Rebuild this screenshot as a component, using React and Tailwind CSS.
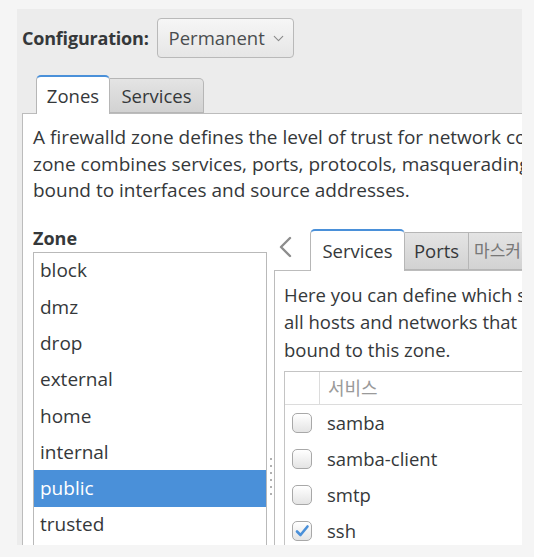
import { ChevronDown } from "lucide-react";

const zones = ["block", "dmz", "drop", "external", "home", "internal", "public", "trusted"];
const services = [
  { name: "samba", on: false },
  { name: "samba-client", on: false },
  { name: "smtp", on: false },
  { name: "ssh", on: true },
];

function Checkbox({ checked }) {
  return (
    <div className="w-[20px] h-[20px] rounded-[5px] border border-[#a8a8a8] bg-gradient-to-b from-[#ffffff] to-[#e4e4e4] flex items-center justify-center shrink-0">
      {checked && (
        <svg width="16" height="16" viewBox="0 0 16 16">
          <path d="M3 8.5 L6.5 12 L13.5 3.5" fill="none" stroke="#4a90d9" strokeWidth="2.6" strokeLinecap="round" strokeLinejoin="round" />
        </svg>
      )}
    </div>
  );
}

export default function App() {
  return (
    <div
      className="w-[534px] h-[557px] bg-[#f5f5f5] pt-[9px] pl-[17px] overflow-hidden text-[#35383a]"
      style={{ fontFamily: '"Open Sans", "Noto Sans CJK KR", sans-serif' }}
    >
      <div className="w-[505px] h-[536px] bg-[#ececec] overflow-hidden flex flex-col">
        {/* configuration row */}
        <div className="flex items-center gap-[8px] pl-[5px] pt-[9px] h-[49px]">
          <span className="text-[18px] font-bold tracking-[-0.2px]">Configuration:</span>
          <div className="h-[40px] w-[137px] rounded-[4px] border border-[#b9b9b9] bg-gradient-to-b from-[#f6f6f6] to-[#e6e6e6] flex items-center pl-[11px] gap-[5px] text-[18.5px] text-[#4a4d4f]">
            <span>Permanent</span>
            <ChevronDown size={17} strokeWidth={1.5} className="text-[#8a8a8a]" />
          </div>
        </div>

        {/* main tabs */}
        <div className="flex items-end pl-[19px] mt-[16px] h-[39px]">
          <div className="h-[39px] w-[74px] rounded-t-[5px] border border-b-0 border-[#b6b6b6] border-t-2 border-t-[#4a90d9] bg-white flex items-center justify-center text-[18.5px] relative z-10 -mb-px">
            Zones
          </div>
          <div className="h-[35px] w-[94px] rounded-tr-[5px] border border-l-0 border-[#b6b6b6] bg-gradient-to-b from-[#e4e4e4] to-[#d2d2d2] flex items-center justify-center text-[18.5px]">
            Services
          </div>
        </div>

        {/* zones panel */}
        <div className="ml-[5px] flex-1 bg-white border-l border-t border-[#bcbcbc] overflow-hidden">
          <p className="pl-[10px] pt-[10px] text-[19px] leading-[26.5px] whitespace-nowrap">
            A firewalld zone defines the level of trust for network co
            <br />
            zone combines services, ports, protocols, masquerading,
            <br />
            bound to interfaces and source addresses.
          </p>

          <div className="flex mt-[24px]">
            {/* zone list */}
            <div className="w-[244px] pl-[10px] shrink-0">
              <div className="text-[18px] font-bold h-[20px] leading-[20px]">Zone</div>
              <div className="mt-[4px] w-[234px] h-[300px] border border-[#b9b9b9] bg-white">
                {zones.map((z) => (
                  <div
                    key={z}
                    className={
                      z === "public"
                        ? "h-[36.3px] flex items-center pl-[6px] text-[19px] bg-[#4a90d9] text-white"
                        : "h-[36.3px] flex items-center pl-[6px] text-[19px]"
                    }
                  >
                    {z}
                  </div>
                ))}
              </div>
            </div>

            {/* pane handle */}
            <div className="w-[7px] shrink-0 flex flex-col items-center pt-[230px] gap-[5px]">
              {[0, 1, 2, 3, 4, 5].map((i) => (
                <div key={i} className="w-[2px] h-[2px] bg-[#b0b0b0]" />
              ))}
            </div>

            {/* zone settings */}
            <div className="flex-1 min-w-0">
              <div className="flex items-end h-[42px]">
                <div className="w-[36px] h-[42px] shrink-0 flex items-start pt-[8px] pl-[4px]">
                  <svg width="14" height="22" viewBox="0 0 14 22">
                    <path d="M12 2 L3 11 L12 20" fill="none" stroke="#8d8d8d" strokeWidth="2.4" strokeLinecap="round" strokeLinejoin="round" />
                  </svg>
                </div>
                <div className="h-[42px] w-[95px] rounded-t-[5px] border border-b-0 border-[#b6b6b6] border-t-2 border-t-[#4a90d9] bg-white flex items-center justify-center text-[18.5px] relative z-10 -mb-px shrink-0">
                  Services
                </div>
                <div className="h-[38px] w-[64px] border border-l-0 border-[#b6b6b6] bg-gradient-to-b from-[#e4e4e4] to-[#d2d2d2] flex items-center justify-center text-[18.5px] shrink-0">
                  Ports
                </div>
                <div className="h-[38px] w-[60px] border border-l-0 border-[#b6b6b6] bg-gradient-to-b from-[#e4e4e4] to-[#d2d2d2] flex items-center pl-[5px] text-[17px] shrink-0 whitespace-nowrap text-[#777]">
                  마스커
                </div>
              </div>
              <div className="border-l border-t border-[#bcbcbc] bg-white pl-[9px] pt-[10px] h-[300px]">
                <p className="text-[18.5px] leading-[27.5px] whitespace-nowrap">
                  Here you can define which s
                  <br />
                  all hosts and networks that
                  <br />
                  bound to this zone.
                </p>
                <div className="mt-[8px] border-l border-t border-[#c4c4c4] w-[300px]">
                  <div className="flex h-[33px] border-b border-[#dcdcdc]">
                    <div className="w-[35px] border-r border-[#dcdcdc]" />
                    <div className="flex items-center pl-[8px] text-[18px] text-[#9a9a9a]">서비스</div>
                  </div>
                  {services.map((s) => (
                    <div key={s.name} className="flex items-center h-[36px] pl-[7px] gap-[15px] text-[18.5px]">
                      <Checkbox checked={s.on} />
                      <span>{s.name}</span>
                    </div>
                  ))}
                </div>
              </div>
            </div>
          </div>
        </div>
      </div>
    </div>
  );
}
